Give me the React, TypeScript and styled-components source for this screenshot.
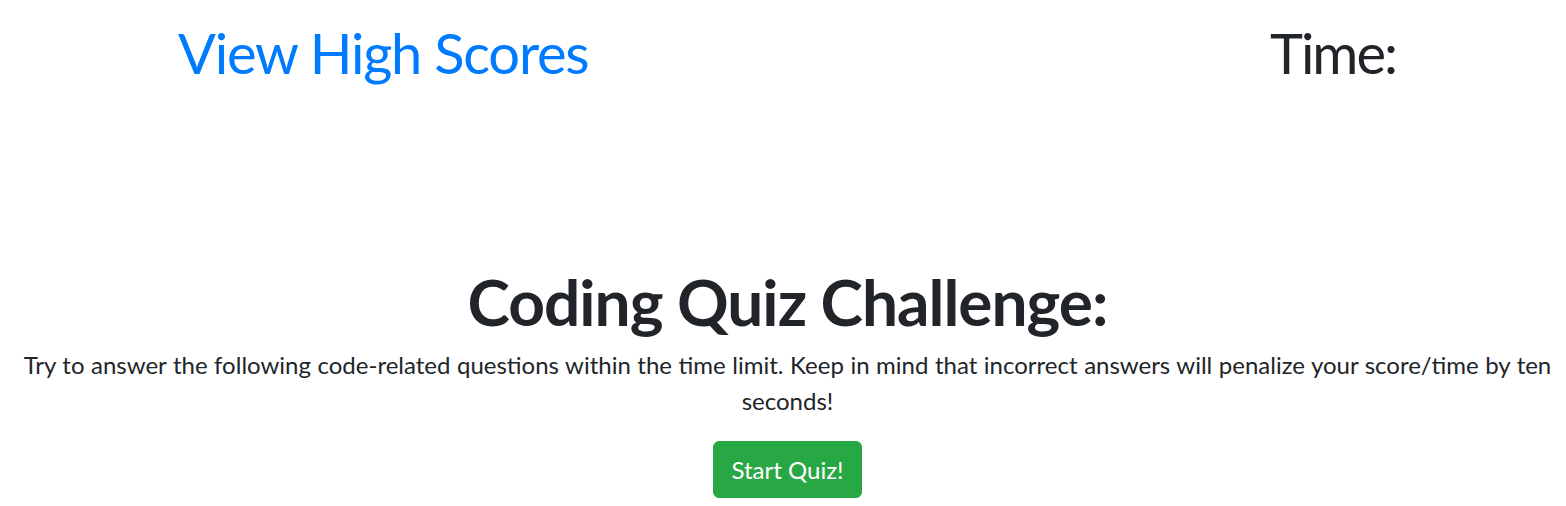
import React from "react";
import styled, { createGlobalStyle } from "styled-components";

const GlobalStyle = createGlobalStyle`
  html, body {
    margin: 0;
    padding: 0;
    background: #ffffff;
  }
  body {
    font-family: Lato, "Open Sans", sans-serif;
    color: #212529;
  }
`;

const Header = styled.header`
  display: flex;
  justify-content: space-between;
  align-items: flex-start;
  padding: 17px 170px 0 178px;
`;

const HeaderTitle = styled.h1<{ $link?: boolean }>`
  margin: 0;
  font-size: 56px;
  line-height: 72px;
  letter-spacing: ${(p) => (p.$link ? "-1.2px" : "-2px")};
  font-weight: 400;
  color: ${(p) => (p.$link ? "#007bff" : "#212529")};
  cursor: ${(p) => (p.$link ? "pointer" : "default")};
`;

const Main = styled.main`
  display: flex;
  flex-direction: column;
  align-items: center;
  text-align: center;
  margin-top: 174px;
  padding-left: 9px;
`;

const Title = styled.h2`
  margin: 0;
  font-size: 64px;
  line-height: 77px;
  letter-spacing: -1px;
  font-weight: 700;
  color: #212529;
`;

const Intro = styled.p`
  margin: 7px 0 0;
  font-size: 24px;
  line-height: 36px;
  word-spacing: 0.4px;
  color: #212529;
`;

const StartButton = styled.button`
  margin-top: 22px;
  font-family: inherit;
  font-size: 24px;
  line-height: 36px;
  padding: 9.5px 18px;
  border: 1px solid #28a745;
  border-radius: 6px;
  background: #28a745;
  color: #ffffff;
  cursor: pointer;
`;

export default function App() {
  return (
    <>
      <GlobalStyle />
      <Header>
        <HeaderTitle $link>View High Scores</HeaderTitle>
        <HeaderTitle>Time:</HeaderTitle>
      </Header>
      <Main>
        <Title>Coding Quiz Challenge:</Title>
        <Intro>
          Try to answer the following code-related questions within the time limit. Keep in mind
          that incorrect answers will penalize your score/time by ten seconds!
        </Intro>
        <StartButton>Start Quiz!</StartButton>
      </Main>
    </>
  );
}
